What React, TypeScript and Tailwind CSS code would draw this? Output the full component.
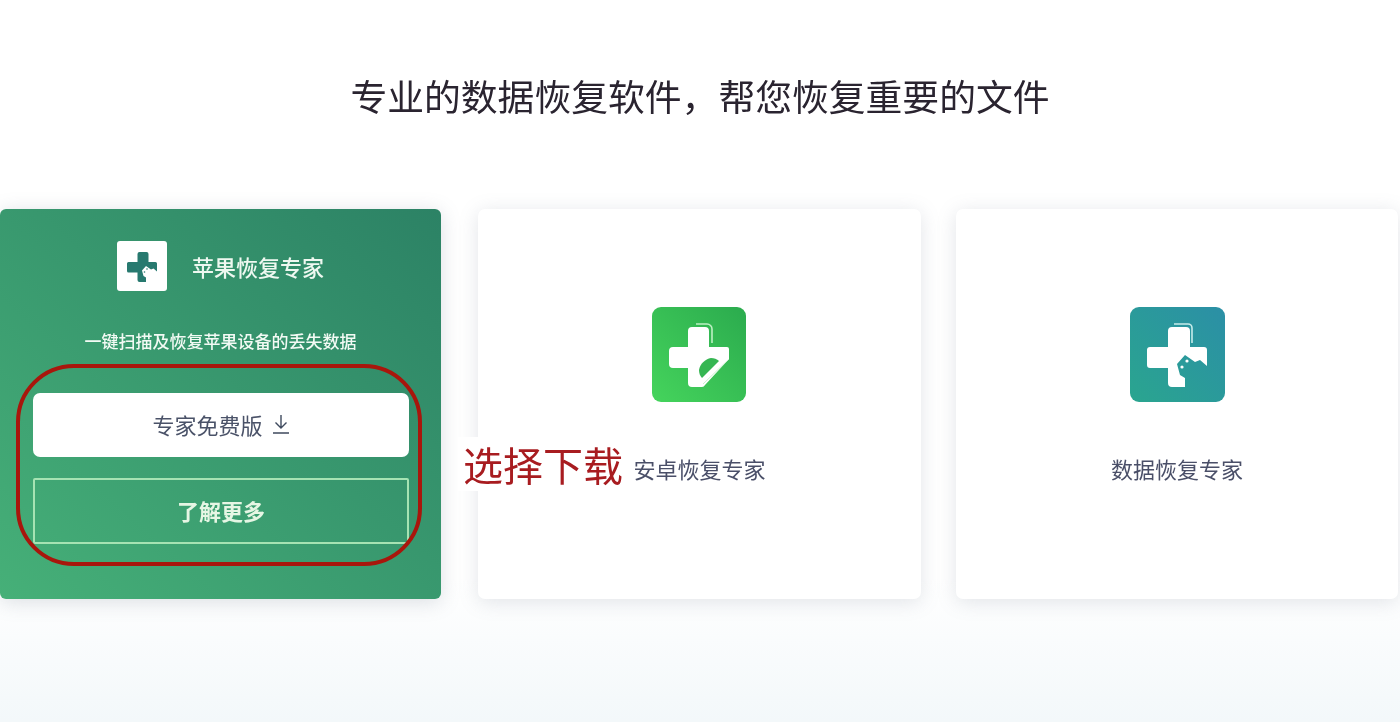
const FONT = "[font-family:'Noto_Sans_CJK_SC','Liberation_Sans',sans-serif]";

function AndroidTile() {
  return (
    <svg viewBox="0 0 95 95" className="block size-[95px]">
      <defs>
        <linearGradient id="androidBg" x1="0" y1="1" x2="1" y2="0">
          <stop offset="0" stopColor="#45d45c" />
          <stop offset="1" stopColor="#2bab4e" />
        </linearGradient>
      </defs>
      <rect width="94" height="95" rx="9" fill="url(#androidBg)" />
      {/* right arm is cut off by the diagonal */}
      <path
        d="M36 24a4 4 0 0 1 4-4h13a4 4 0 0 1 4 4v16h18a2 2 0 0 1 2 2v10L53 78a4 4 0 0 1-3 2H40a4 4 0 0 1-4-4V61H21a4 4 0 0 1-4-4V44a4 4 0 0 1 4-4h15z"
        fill="#fff"
      />
      <path d="M44 17h11a5 5 0 0 1 5 5V36" fill="none" stroke="#bdf0c4" strokeWidth="1.6" />
      <path d="M47 63c1-6 6-11 12-12 3 0 6 1 8 3L50 71c-2-2-3-5-3-8z" fill="#35b652" />
      <path d="M51 77l26-25" stroke="#c9f3cf" strokeWidth="1" />
    </svg>
  );
}

function DataCross({ fill, line, dots }: { fill: string; line?: string; dots: string }) {
  return (
    <>
      <path
        d="M38 24a4 4 0 0 1 4-4h14a4 4 0 0 1 4 4v16h14a3 3 0 0 1 3 3v16l-7-6-5 2-10-7-8 9 3 11 5 3v9H42a4 4 0 0 1-4-4V61H20a3 3 0 0 1-3-3V43a3 3 0 0 1 3-3h18z"
        fill={fill}
      />
      {line && <path d="M44 17h14a4 4 0 0 1 4 4V36" fill="none" stroke={line} strokeWidth="1.6" />}
      <circle cx="52" cy="60" r="1.600" fill={dots} />
      <circle cx="57" cy="54" r="1.600" fill={dots} />
    </>
  );
}

function DataTile() {
  return (
    <svg viewBox="0 0 95 95" className="block size-[95px]">
      <defs>
        <linearGradient id="dataBg" x1="0" y1="1" x2="1" y2="0">
          <stop offset="0" stopColor="#2aa58f" />
          <stop offset="1" stopColor="#2b8fa6" />
        </linearGradient>
      </defs>
      <rect width="95" height="95" rx="9" fill="url(#dataBg)" />
      <DataCross fill="#fff" line="#c6ecea" dots="#fff" />
    </svg>
  );
}

function AppleTile() {
  return (
    <div className="flex size-[50px] items-center justify-center rounded-[3px] bg-white">
      <svg viewBox="12 12 70 72" className="block size-[36px]">
        <DataCross fill="#27796f" dots="#27796f" />
      </svg>
    </div>
  );
}

function DownloadIcon() {
  return (
    <svg viewBox="0 0 18 20" className="h-[20px] w-[18px]" fill="none" stroke="#3f4a5e" strokeWidth="1.4">
      <path d="M9 1v13M3.500 8.500 9 14l5.500-5.500M1 19h16" />
    </svg>
  );
}

function PlainCard({ label, children }: { label: string; children: React.ReactNode }) {
  return (
    <div className="flex h-[390px] flex-col items-center rounded-[7px] bg-white pt-[98px] shadow-[0_3px_20px_rgba(110,120,140,0.2)]">
      {children}
      <div className="mt-[51px] text-[22px] leading-[30px] text-[#4a4f68]">{label}</div>
    </div>
  );
}

export default function App() {
  return (
    <div className={`h-[722px] w-[1400px] overflow-hidden bg-gradient-to-b from-white from-80% to-[#f3f8fa] blur-[0.4px] ${FONT}`}>
      <h1 className="pt-[69px] text-center text-[36.8px] leading-[52px] font-normal text-[#2a2430]">
        专业的数据恢复软件，帮您恢复重要的文件
      </h1>
      <div className="relative mt-[88px] flex">
        <div className="flex h-[390px] w-[441px] flex-col rounded-[6px] bg-gradient-to-tr from-[#46b078] to-[#2c8265] px-[33px] pt-[32px] shadow-[0_3px_20px_rgba(110,120,140,0.24)]">
          <div className="flex items-center justify-center gap-[25px]">
            <AppleTile />
            <div className="text-[22px] leading-[30px] font-medium text-[#eef8f0]">苹果恢复专家</div>
          </div>
          <div className="mt-[37px] text-center text-[17px] leading-[26px] font-medium text-[#f2faf4]">
            一键扫描及恢复苹果设备的丢失数据
          </div>
          <button className="mt-[39px] flex h-[64px] w-[376px] items-center justify-center gap-[9px] rounded-[7px] bg-white pb-[2px] text-[22px] text-[#4a5268]">
            专家免费版
            <DownloadIcon />
          </button>
          <button className="mt-[21px] h-[66px] w-[376px] rounded-[2px] border-2 border-[#a6e3b3] pb-[2px] text-[22px] font-bold text-[#e6f6e4]">
            了解更多
          </button>
        </div>
        <div className="ml-[37px] w-[443px]">
          <PlainCard label="安卓恢复专家">
            <AndroidTile />
          </PlainCard>
        </div>
        <div className="ml-[35px] w-[442px]">
          <PlainCard label="数据恢复专家">
            <DataTile />
          </PlainCard>
        </div>
        <div className="absolute top-[155px] left-[16px] h-[202px] w-[406px] rounded-[58px] border-4 border-[#a8160c]" />
        <div className="absolute top-[228px] left-[458px] bg-white pr-[4px] pl-[5px] text-[40px] leading-[54px] text-[#a81c20]">
          选择下载
        </div>
      </div>
    </div>
  );
}
